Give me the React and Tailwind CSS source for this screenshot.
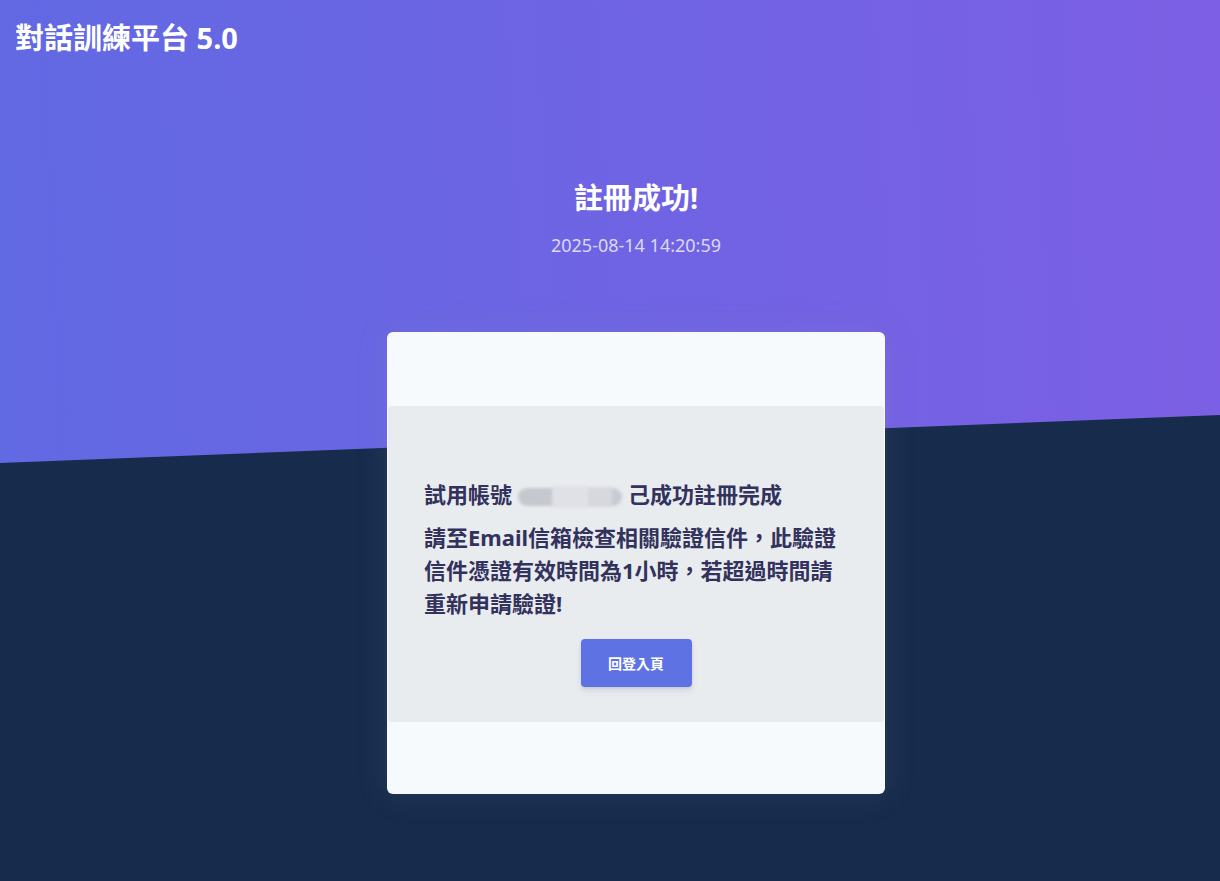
export default function App() {
  return (
    <div className="relative min-h-screen overflow-hidden bg-[#172b4d] font-['Noto_Sans','Noto_Sans_CJK_TC',sans-serif]">
      {/* slanted gradient header background */}
      <div className="absolute left-0 top-0 h-[463px] w-full bg-[linear-gradient(87deg,#6169e3_0%,#7c5fe4_100%)] [clip-path:polygon(0_0,100%_0,100%_415px,0_100%)]" />

      <div className="relative">
        <nav className="px-[15px] pt-[18px]">
          <h1 className="text-[29px] font-bold leading-[40px] text-white">對話訓練平台 5.0</h1>
        </nav>

        <div className="pl-[52px]">
          <header className="mt-[120px] text-center">
            <h2 className="text-[29px] font-bold leading-[40px] text-white">註冊成功!</h2>
            <p className="mt-[14px] text-[18px] leading-[26px] text-[#dcd8f6]">2025-08-14 14:20:59</p>
          </header>

          <main className="mx-auto mt-[74px] w-[498px] rounded-md bg-[#f7fafc] pb-[72px] pt-[74px] shadow-[0_0_32px_0_rgba(136,152,170,0.15)]">
            <div className="mx-px rounded bg-[#e9ecef] px-9 pb-[35px] pt-[72px]">
              <p className="text-[22px] font-bold leading-[33px] text-[#32325d]">
                試用帳號
                <span className="mx-[6px] inline-flex h-[22px] w-[104px] items-center align-[-3px] blur-[1.5px]">
                  <span className="h-[18px] w-[34px] rounded-l-full bg-[#c6c8cf]" />
                  <span className="h-[22px] w-[36px] bg-[#dfe1e6]" />
                  <span className="h-[20px] w-[24px] bg-[#d6d8de]" />
                  <span className="h-[18px] w-[10px] rounded-r-full bg-[#c9cbd2]" />
                </span>
                己成功註冊完成
              </p>
              <p className="mt-[10px] text-[22px] font-bold leading-[33px] text-[#32325d]">
                請至Email信箱檢查相關驗證信件，此驗證信件憑證有效時間為1小時，若超過時間請重新申請驗證!
              </p>
              <div className="mt-[19px] flex justify-center">
                <button className="h-[48px] w-[111px] rounded bg-[#5e72e4] text-[14px] font-bold text-white shadow-[0_4px_6px_rgba(50,50,93,0.11),0_1px_3px_rgba(0,0,0,0.08)]">
                  回登入頁
                </button>
              </div>
            </div>
          </main>
        </div>
      </div>
    </div>
  )
}
